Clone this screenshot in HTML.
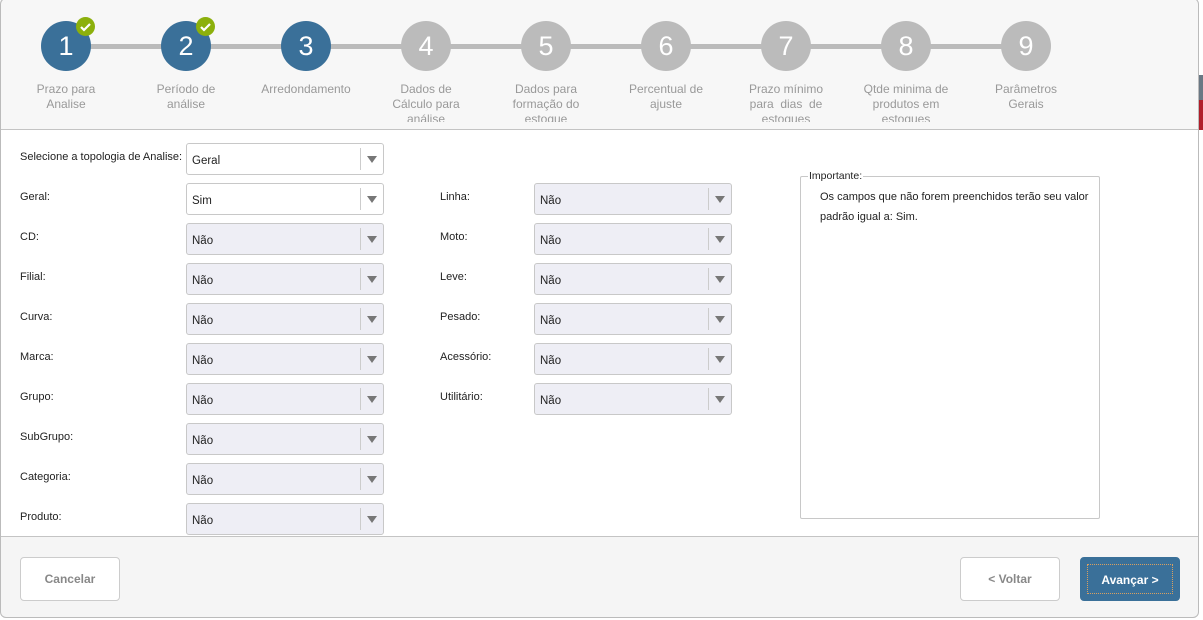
<!DOCTYPE html>
<html><head><meta charset="utf-8"><style>
*{box-sizing:border-box;margin:0;padding:0}
body{width:1203px;height:620px;background:#fff;font-family:"Liberation Sans",Arial,sans-serif;position:relative;overflow:hidden}
.modal{position:absolute;left:0;top:0;width:1199px;height:618px;border-radius:0 0 6px 6px;background:#fff;overflow:hidden}
.frame{position:absolute;left:0;top:-2px;width:1199px;height:620px;border:1px solid #bbb;border-radius:6px;pointer-events:none}
.head{position:absolute;left:0;top:0;width:1198px;height:130px;background:#f7f7f7;border-bottom:1px solid #c4c4c4}
.line{position:absolute;top:44px;height:5px;background:#bbb}
.c{position:absolute;top:21px;width:50px;height:50px;border-radius:50%;background:#bbb;color:#fff;font-size:27px;text-align:center;line-height:50px}
.c.b{background:#3a7099}
.ok{position:absolute;width:19px;height:19px;border-radius:50%;background:#8cb00c;top:17px}
.lab{position:absolute;top:82px;width:110px;text-align:center;color:#999;font-size:12px;line-height:15px;height:40px;overflow:hidden}
.l{position:absolute;font-size:11px;color:#222}
.s{position:absolute;width:198px;height:32px;border:1px solid #c8c8c8;border-radius:3px;background:#eeeef5;font-size:11.5px;color:#222;padding:11px 0 0 5px}
.s.w{background:#fff}
.s:after{content:"";position:absolute;right:22px;top:4px;height:22px;border-left:1px solid #ccc}
.s:before{content:"";position:absolute;right:6px;top:12px;border:5px solid transparent;border-top:7px solid #777}
.fs{position:absolute;left:800px;top:176px;width:300px;height:343px;border:1px solid #c8c8c8;border-radius:2px}
.foot{position:absolute;left:0;top:536px;width:1198px;height:82px;background:#f5f5f5;border-top:1px solid #c4c4c4}
.btn{position:absolute;top:20px;width:100px;height:44px;border:1px solid #ccc;border-radius:4px;background:#fff;color:#888;font-size:12px;font-weight:bold;text-align:center;line-height:42px}
</style></head><body>
<div style="position:absolute;left:1199px;top:75px;width:4px;height:25px;background:#6a7884"></div>
<div style="position:absolute;left:1199px;top:100px;width:4px;height:30px;background:#b01e2a"></div>
<div class="modal">
<div class="head">
<div class="line" style="left:66px;width:960px"></div>
<div class="c b" style="left:41px">1</div><div class="ok" style="left:76px"><svg width="19" height="19"><path d="M5 10l3 3 6-6" stroke="#fff" stroke-width="2.2" fill="none"/></svg></div>
<div class="c b" style="left:161px">2</div><div class="ok" style="left:196px"><svg width="19" height="19"><path d="M5 10l3 3 6-6" stroke="#fff" stroke-width="2.2" fill="none"/></svg></div>
<div class="c b" style="left:281px">3</div>
<div class="c" style="left:401px">4</div><div class="c" style="left:521px">5</div><div class="c" style="left:641px">6</div><div class="c" style="left:761px">7</div><div class="c" style="left:881px">8</div><div class="c" style="left:1001px">9</div>
<div class="lab" style="left:11px">Prazo para<br>Analise</div>
<div class="lab" style="left:131px">Período de<br>análise</div>
<div class="lab" style="left:251px">Arredondamento</div>
<div class="lab" style="left:371px">Dados de<br>Cálculo para<br>análise</div>
<div class="lab" style="left:491px">Dados para<br>formação do<br>estoque</div>
<div class="lab" style="left:611px">Percentual de<br>ajuste</div>
<div class="lab" style="left:731px">Prazo mínimo<br>para &nbsp;dias &nbsp;de<br>estoques</div>
<div class="lab" style="left:851px">Qtde minima de<br>produtos em<br>estoques</div>
<div class="lab" style="left:971px">Parâmetros<br>Gerais</div>
</div>
<div class="l" style="left:20px;top:151px">Selecione a topologia de Analise:</div><div class="s w" style="left:186px;top:143px">Geral</div>
<div class="l" style="left:20px;top:191px">Geral:</div><div class="s w" style="left:186px;top:183px">Sim</div>
<div class="l" style="left:20px;top:231px">CD:</div><div class="s" style="left:186px;top:223px">Não</div>
<div class="l" style="left:20px;top:271px">Filial:</div><div class="s" style="left:186px;top:263px">Não</div>
<div class="l" style="left:20px;top:311px">Curva:</div><div class="s" style="left:186px;top:303px">Não</div>
<div class="l" style="left:20px;top:351px">Marca:</div><div class="s" style="left:186px;top:343px">Não</div>
<div class="l" style="left:20px;top:391px">Grupo:</div><div class="s" style="left:186px;top:383px">Não</div>
<div class="l" style="left:20px;top:431px">SubGrupo:</div><div class="s" style="left:186px;top:423px">Não</div>
<div class="l" style="left:20px;top:471px">Categoria:</div><div class="s" style="left:186px;top:463px">Não</div>
<div class="l" style="left:20px;top:511px">Produto:</div><div class="s" style="left:186px;top:503px">Não</div>
<div class="l" style="left:440px;top:191px">Linha:</div><div class="s" style="left:534px;top:183px">Não</div>
<div class="l" style="left:440px;top:231px">Moto:</div><div class="s" style="left:534px;top:223px">Não</div>
<div class="l" style="left:440px;top:271px">Leve:</div><div class="s" style="left:534px;top:263px">Não</div>
<div class="l" style="left:440px;top:311px">Pesado:</div><div class="s" style="left:534px;top:303px">Não</div>
<div class="l" style="left:440px;top:351px">Acessório:</div><div class="s" style="left:534px;top:343px">Não</div>
<div class="l" style="left:440px;top:391px">Utilitário:</div><div class="s" style="left:534px;top:383px">Não</div>
<div class="fs"></div>
<div class="l" style="left:808px;top:170px;background:#fff;padding:0 1px;font-size:10.5px">Importante:</div>
<div class="l" style="left:820px;top:187px;line-height:20px;font-size:11px">Os campos que não forem preenchidos terão seu valor<br>padrão igual a: Sim.</div>
<div class="foot">
<div class="btn" style="left:20px">Cancelar</div>
<div class="btn" style="left:960px">&lt; Voltar</div>
<div class="btn" style="left:1080px;background:#3a7099;border-color:#3a7099;color:#fff"><div style="position:absolute;left:6px;top:6px;right:6px;bottom:6px;border:1px dotted #d9a060;line-height:30px">Avançar &gt;</div></div>
</div>
</div>
<div class="frame"></div>
</body></html>
